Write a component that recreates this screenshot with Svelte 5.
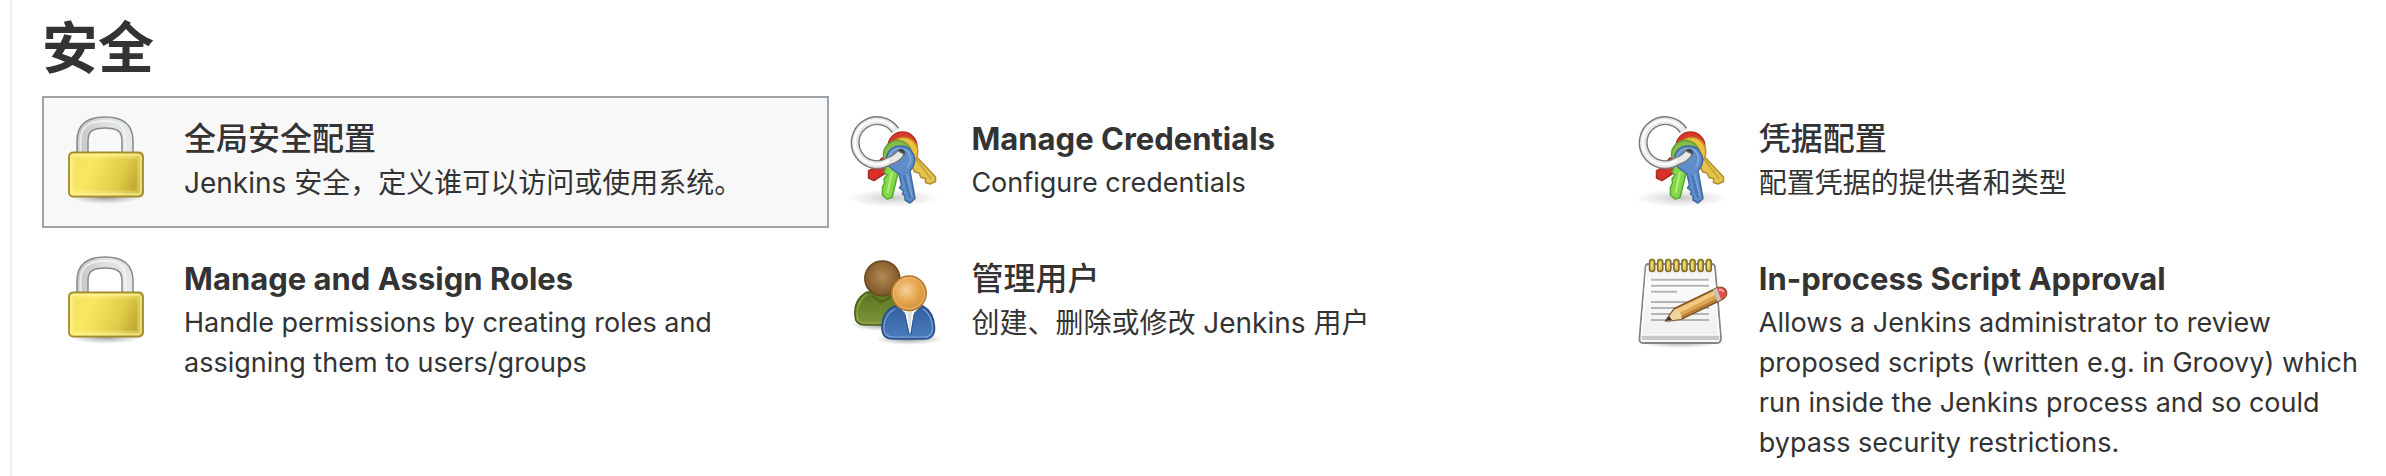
<script>
  const items = [
    { icon: 'lock', lang: 'zh', title: '全局安全配置', text: 'Jenkins 安全，定义谁可以访问或使用系统。', active: true },
    { icon: 'keys', lang: 'en', title: 'Manage Credentials', text: 'Configure credentials' },
    { icon: 'keys', lang: 'zh', title: '凭据配置', text: '配置凭据的提供者和类型' },
    { icon: 'lock', lang: 'en', title: 'Manage and Assign Roles', text: 'Handle permissions by creating roles and assigning them to users/groups' },
    { icon: 'users', lang: 'zh', title: '管理用户', text: '创建、删除或修改 Jenkins 用户' },
    { icon: 'notepad', lang: 'en', title: 'In-process Script Approval', text: 'Allows a Jenkins administrator to review proposed scripts (written e.g. in Groovy) which run inside the Jenkins process and so could bypass security restrictions.' }
  ];
  const rings = [0, 1, 2, 3, 4, 5, 6, 7];
</script>

{#snippet lock()}
  <ellipse cx="48" cy="82" rx="36" ry="7" fill="url(#shade)" />
  <path d="M24.5 42V26C24.5 12 33 7.5 47 7.5S69.5 12 69.5 26V42" fill="none" stroke="#85898a" stroke-width="12.5" />
  <path d="M24.5 42V26C24.5 12 33 7.5 47 7.5S69.5 12 69.5 26V42" fill="none" stroke="url(#steel)" stroke-width="9.5" />
  <path d="M22.5 40V26C22.5 10 33 6 47 6S67.5 10 67.5 26V40" fill="none" stroke="#f7f8f7" stroke-width="2" opacity=".75" />
  <rect x="11" y="37.5" width="74" height="44" rx="4" fill="url(#brass)" stroke="#a18b2e" stroke-width="1.8" />
  <rect x="13.2" y="39.7" width="69.6" height="39.6" rx="3" fill="none" stroke="#fff7a0" stroke-width="2.4" opacity=".65" />
  <rect x="15.8" y="42.3" width="64.4" height="34.4" rx="2" fill="none" stroke="#fff7a0" stroke-width="2.5" opacity=".3" />
{/snippet}

{#snippet keys()}
  <ellipse cx="48" cy="83" rx="46" ry="9" fill="url(#shade)" opacity=".5" />
  <g stroke-linejoin="round" stroke-width="1.5">
    <path d="M37 43L27 54L23.5 56L23.5 63L29 65.5L42 57L50 47Z" fill="#d9302b" stroke="#a92c22" />
    <path d="M68 38L90.5 62V66.5L85 69L80.5 67.5V63.5L76 62.5L74 58L70 57L64 47Z" fill="#e5c44b" stroke="#ad8d2d" />
    <path d="M71 44L86 64" fill="none" stroke="#c7a43a" stroke-width="1.8" />
    <circle cx="57.5" cy="31.5" r="14.4" fill="#d63b2c" stroke="#b53124" />
    <circle cx="58.8" cy="36.5" r="14" fill="#ebc13e" stroke="#c98a29" />
    <path d="M43 48L39 57L42 60L39 64L39.5 68L37.5 72L37.5 80L42 84L47 82.5L54 54Z" fill="#83d94b" stroke="#56a92f" />
    <path d="M47 57L42.5 78" fill="none" stroke="#b4ef7b" stroke-width="2" />
    <circle cx="52.5" cy="39.5" r="14" fill="#83bd48" stroke="#649e37" />
    <path d="M48.5 55L54 59L56.5 70L54.5 73L58.5 76L57.5 79L60 81V85L65 88L70 83.5L65 56C74 46 69 31 55 31C41 31 36.5 48 48.5 55Z" fill="#5e8dca" stroke="#3f689d" />
    <path d="M46 51C40 42 47 33.5 55 33.5C64 33.5 69 44 62.5 52" fill="none" stroke="#83aada" />
    <path d="M59 60L65 83" stroke="#4777b4" stroke-width="2.5" />
    <path d="M61.5 59L67 81" stroke="#86ade0" stroke-width="1" />
  </g>
  <circle cx="56" cy="38" r="4.3" fill="#3c4a50" />
  <path d="M50.5 15.5A22 22 0 1 0 44 46.2C50 44 54 41 56 37" fill="none" stroke="#777979" stroke-width="9" />
  <path d="M50.8 16A22 22 0 1 0 44 46.2C50 44 54 41 55.5 38" fill="none" stroke="#e7e8e8" stroke-width="6.2" />
  <path d="M48 12.6A22 22 0 1 0 44 45.5" fill="none" stroke="#fff" stroke-width="2.2" />
{/snippet}

{#snippet users()}
  <ellipse cx="37" cy="70" rx="31" ry="6" fill="url(#shade)" />
  <ellipse cx="64" cy="84" rx="34" ry="6" fill="url(#shade)" />
  <path d="M22 37C13 42 9 51 10 61C10 67 14 70 20 70H55L60 46L51 38Z" fill="url(#olive)" stroke="#4b6019" stroke-width="1.5" />
  <path d="M22 39C15 44 12 52 12 60C12 65 15 68 21 68H44" fill="none" stroke="#a2b65a" stroke-width="1.2" opacity=".75" />
  <path d="M27 41L36 47L48 41" fill="none" stroke="#4e651a" stroke-width="2" />
  <circle cx="37.3" cy="23.4" r="17.5" fill="url(#brown)" stroke="#684721" stroke-width="1.5" />
  <path d="M50 51C40 55 37 63 37 73C37 80 41 84 48 84H80C87 84 90 79 89.5 72C89 62 85 55 78 51Z" fill="url(#blue)" stroke="#284f87" stroke-width="1.5" />
  <path d="M50 54C42 58 39 65 39 73C39 79 42 82 48 82H79C85 82 88 78 87.5 72C87 64 84 58 78 54" fill="none" stroke="#7ba0d3" stroke-width="1.2" />
  <path d="M56 54L60 58L65 80L69 58L73 54Z" fill="#fff" />
  <path d="M62 56L65 78L67 56Z" fill="#dedfe2" />
  <path d="M55 54L60 60L64 80M74 54L69 60L66 80" fill="none" stroke="#2d578f" stroke-width="1" />
  <circle cx="64" cy="38.3" r="17.2" fill="url(#peach)" stroke="#b47830" stroke-width="1.5" />
  <circle cx="64" cy="38.3" r="15.6" fill="none" stroke="#f6cb88" stroke-width="1" opacity=".7" />
{/snippet}

{#snippet notepad()}
  <ellipse cx="47" cy="87" rx="42" ry="6" fill="url(#shade)" />
  <path d="M15 9H79Q81.5 9 82 12L88 83Q88 88 84 88H10Q6 88 6.5 83L12.5 12Q13 9 15 9Z" fill="url(#paper)" stroke="#858585" stroke-width="1.8" />
  <path d="M14 11L8.5 80H86L80 11" fill="none" stroke="#fff" stroke-width="1.5" />
  <path d="M9 80H86V85H9Z" fill="#c8c8c8" />
  <path d="M8 80H86M8 86H86" stroke="#f9f9f9" stroke-width="1.5" />
  <path d="M18 24.7H76M18 30.7H76M18 36.7H44M18 47H76M18 53H76M18 59H76M18 65H76" stroke="#b5b5b5" stroke-width="2" />
  {#each rings as n}
    <rect x={16.6 + n * 8.1} y="4.5" width="5" height="12" rx="2.5" fill="#dfc44c" stroke="#826e2b" stroke-width="1.6" />
    <path d={`M${18.6 + n * 8.1} 7V13`} stroke="#f8e789" stroke-width="1.2" />
  {/each}
  <path d="M34 68L48 65L86 46L75 45L43 58Z" fill="#555" opacity=".28" />
  <path d="M32.5 66L41.5 53.5L83 33.5C88 31 92.5 33 93.5 37C94 41 92 43 88 45L48.5 64Z" fill="#dba754" stroke="#7b5529" stroke-width="1.6" stroke-linejoin="round" />
  <path d="M43 54.5L81 36.3L83 39.5L46 58Z" fill="#f1ca7e" />
  <path d="M48 61L85 43L86 45L49 63Z" fill="#b77d34" />
  <path d="M32.5 66L42 54Q49 56 48.5 64Z" fill="#eed5a0" />
  <path d="M32.5 66L36 61L39 65Z" fill="#37332f" />
  <path d="M80 35L84 33L88.5 44.5L84.5 46.5Z" fill="#c6c4c1" />
  <path d="M84 33C89 31 92 34 92.8 37C93.5 41 91 43 88 44.5Z" fill="#e74d4d" />
  <path d="M86 35Q89 34 90.5 37" fill="none" stroke="#ffaaa0" stroke-width="2" />
{/snippet}

<svg class="defs" aria-hidden="true">
  <defs>
    <radialGradient id="shade"><stop offset="0" stop-color="#000" stop-opacity=".42" /><stop offset=".5" stop-color="#000" stop-opacity=".18" /><stop offset="1" stop-color="#000" stop-opacity="0" /></radialGradient>
    <linearGradient id="brass" x2="1" y2=".25"><stop offset="0" stop-color="#f3df59" /><stop offset=".35" stop-color="#f9e762" /><stop offset=".8" stop-color="#dfcb47" /><stop offset="1" stop-color="#c4ad35" /></linearGradient>
    <linearGradient id="steel"><stop offset="0" stop-color="#c8cbca" /><stop offset=".5" stop-color="#dcdfdd" /><stop offset="1" stop-color="#e5e9e4" /></linearGradient>
    <linearGradient id="paper" x2="0" y2="1"><stop offset="0" stop-color="#ececec" /><stop offset=".25" stop-color="#fcfcfc" /><stop offset="1" stop-color="#ededed" /></linearGradient>
    <linearGradient id="olive" x2="0" y2="1"><stop offset="0" stop-color="#5d7420" /><stop offset="1" stop-color="#7e953c" /></linearGradient>
    <linearGradient id="blue" x2="0" y2="1"><stop offset="0" stop-color="#315f9f" /><stop offset="1" stop-color="#4d7dbd" /></linearGradient>
    <radialGradient id="brown" cx=".5" cy=".45"><stop offset="0" stop-color="#b48a55" /><stop offset=".65" stop-color="#946b38" /><stop offset="1" stop-color="#80592b" /></radialGradient>
    <radialGradient id="peach" cx=".42" cy=".4"><stop offset="0" stop-color="#f7d09a" /><stop offset=".7" stop-color="#e6a64f" /><stop offset="1" stop-color="#d99740" /></radialGradient>
  </defs>
</svg>

<main>
  <h2 lang="zh">安全</h2>
  <section class="grid">
    {#each items as item}
      <a class="item" class:active={item.active} class:latin={item.lang === 'en'} lang={item.lang} href="#top">
        <svg class="icon" viewBox="0 0 96 96" aria-hidden="true">
          {#if item.icon === 'lock'}{@render lock()}
          {:else if item.icon === 'keys'}{@render keys()}
          {:else if item.icon === 'users'}{@render users()}
          {:else}{@render notepad()}{/if}
        </svg>
        <dl>
          <dt>{item.title}</dt>
          <dd>{item.text}</dd>
        </dl>
      </a>
    {/each}
  </section>
</main>

<style>
  :global(body) {
    background: #fff;
  }
  .defs {
    position: absolute;
    width: 0;
    height: 0;
  }
  main {
    box-sizing: border-box;
    min-height: 100vh;
    margin-left: 10px;
    padding-left: 30px;
    border-left: 2px solid #eceeef;
    color: #333;
    font-family: Inter, "Noto Sans CJK SC", sans-serif;
  }
  h2 {
    margin: 0;
    font-size: 56px;
    font-weight: 600;
    line-height: 96px;
  }
  .grid {
    display: grid;
    grid-template-columns: 33vw 33vw 1fr;
    row-gap: 8px;
  }
  .item {
    box-sizing: border-box;
    display: flex;
    align-items: flex-start;
    gap: 30px;
    min-height: 132px;
    padding: 17px 8px 8px 14px;
    border: 2px solid transparent;
    color: inherit;
    text-decoration: none;
  }
  .item.active {
    background: #f8f8f8;
    border-color: #9ea5aa;
  }
  .icon {
    flex: none;
    width: 96px;
    height: 96px;
  }
  dl,
  dd {
    margin: 0;
  }
  dl {
    flex: 0 1 620px;
  }
  dt {
    font-size: 32px;
    font-weight: 500;
    line-height: 48px;
  }
  dd {
    font-size: 28px;
    line-height: 40px;
  }
  .latin dt {
    font-size: 31px;
    font-weight: 700;
  }
  .latin dd {
    font-size: 27px;
  }
</style>
